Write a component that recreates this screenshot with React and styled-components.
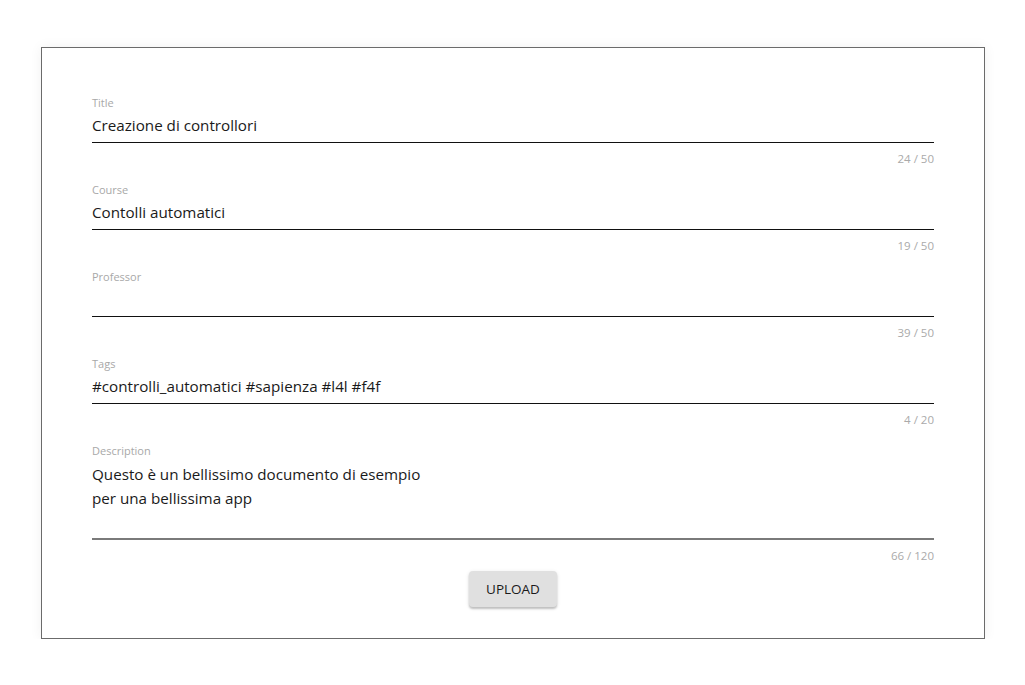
import React from "react";
import styled, { createGlobalStyle } from "styled-components";

const GlobalStyle = createGlobalStyle`
  body {
    margin: 0;
    background: #ffffff;
    font-family: "Open Sans", "Noto Sans", sans-serif;
  }
`;

const fields = [
  { label: "Title", value: "Creazione di controllori", count: "24 / 50" },
  { label: "Course", value: "Contolli automatici", count: "19 / 50" },
  { label: "Professor", value: "", count: "39 / 50" },
  { label: "Tags", value: "#controlli_automatici #sapienza #l4l #f4f", count: "4 / 20" },
];

function App() {
  return (
    <>
      <GlobalStyle />
      <Page>
        <Card>
          {fields.map((f) => (
            <Field key={f.label}>
              <Label>{f.label}</Label>
              <InputRow>{f.value}</InputRow>
              <Counter>{f.count}</Counter>
            </Field>
          ))}
          <Field>
            <Label>Description</Label>
            <TextArea>
              Questo è un bellissimo documento di esempio
              <br />
              per una bellissima app
            </TextArea>
            <Counter>66 / 120</Counter>
          </Field>
          <ButtonRow>
            <UploadButton>UPLOAD</UploadButton>
          </ButtonRow>
        </Card>
      </Page>
    </>
  );
}

export default App;

const Page = styled.div`
  padding: 47px 0 0 41px;
`;

const Card = styled.div`
  box-sizing: border-box;
  width: 944px;
  height: 592px;
  border: 1px solid #6b6b6b;
  box-shadow: 0 0 12px rgba(0, 0, 0, 0.06);
  padding: 47px 50px 0 50px;
`;

const Field = styled.div`
  display: flex;
  flex-direction: column;
  margin-bottom: 15px;
`;

const Label = styled.div`
  font-size: 11px;
  line-height: 16px;
  color: #a8a8a8;
`;

const InputRow = styled.div`
  font-size: 15.2px;
  line-height: 24px;
  height: 24px;
  color: #1a1a1a;
  padding: 2px 0 5px;
  border-bottom: 1px solid #111111;
`;

const TextArea = styled.div`
  font-size: 15.2px;
  line-height: 24px;
  height: 72px;
  color: #1a1a1a;
  padding: 3px 0 4px;
  border-bottom: 2px solid #7a7a7a;
`;

const Counter = styled.div`
  margin-top: 8px;
  font-size: 11.5px;
  line-height: 16px;
  color: #aaaaaa;
  text-align: right;
`;

const ButtonRow = styled.div`
  display: flex;
  justify-content: center;
  margin-top: -8px;
`;

const UploadButton = styled.button`
  width: 88px;
  height: 36px;
  border: none;
  border-radius: 4px;
  background: #e0e0e0;
  box-shadow: 0 2px 2px rgba(0, 0, 0, 0.2), 0 1px 4px rgba(0, 0, 0, 0.1);
  font-family: "Open Sans", "Noto Sans", sans-serif;
  font-size: 13.5px;
  color: #1a1a1a;
  cursor: pointer;
`;
